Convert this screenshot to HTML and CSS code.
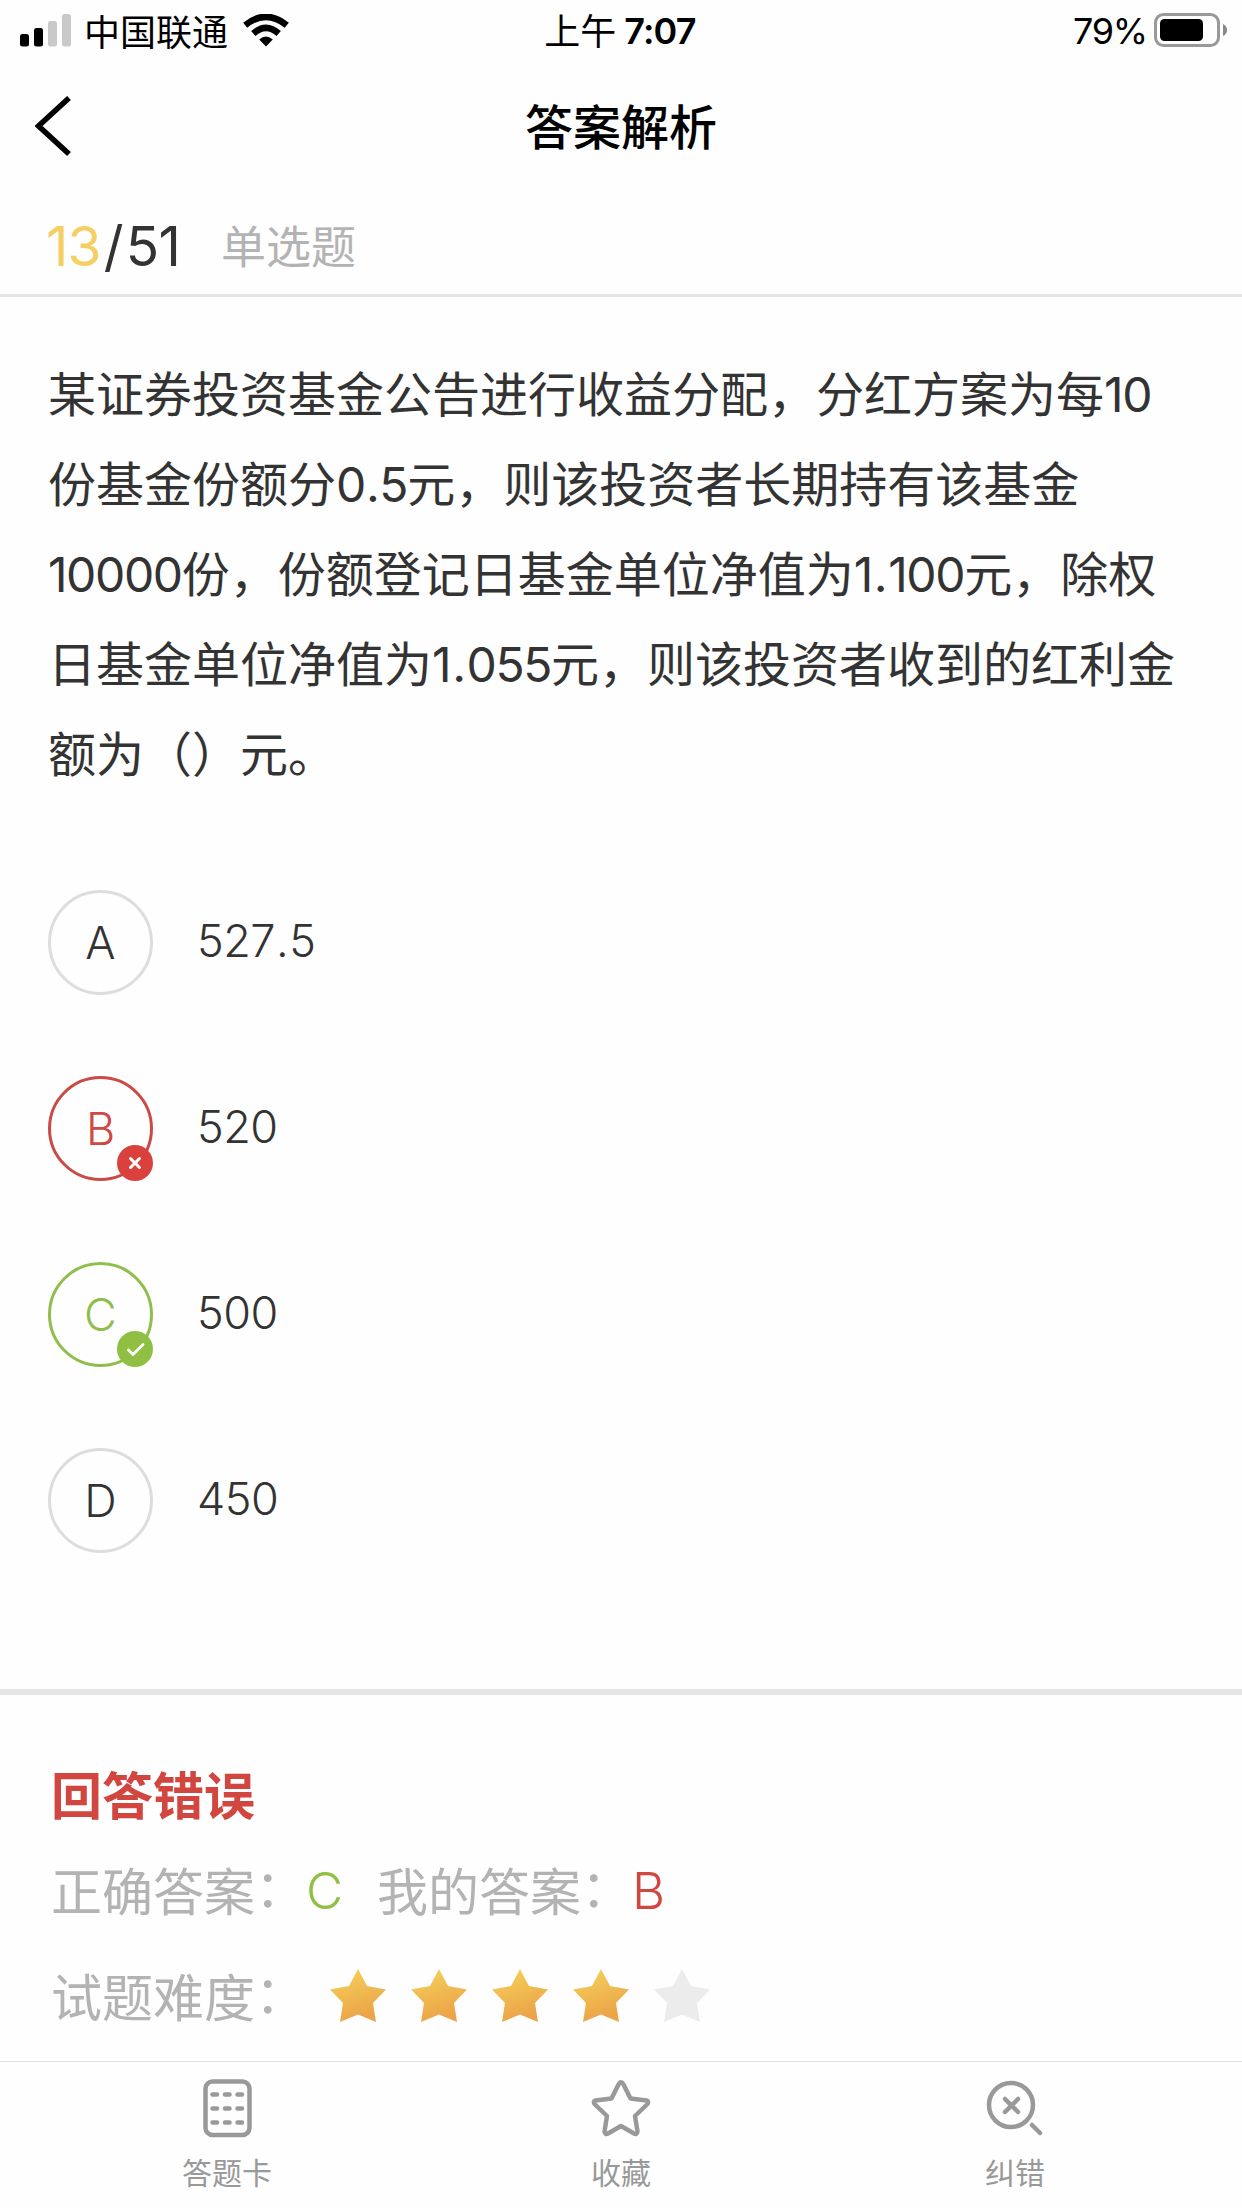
FILE: index.html
```html
<!DOCTYPE html>
<html lang="zh-CN">
<head>
<meta charset="utf-8">
<title>答案解析</title>
<link rel="stylesheet" href="styles.css">
</head>
<body>
<div class="screen">
  <header class="status">
    <div class="status-left">
      <svg class="signal" width="52" height="33" viewBox="0 0 52 33"><rect y="20" width="9" height="12.500" rx="2.500"/><rect x="14" y="14" width="9" height="18.500" rx="2.500"/><g fill="#c9c9c9"><rect x="28" y="7" width="9" height="25.500" rx="2.500"/><rect x="42" width="9" height="32.500" rx="2.500"/></g></svg>
      <span class="carrier">中国联通</span>
      <svg class="wifi" width="46" height="33" viewBox="0 0 46 33"><path d="M23 32.500 16.200 25.600Q23 19.200 29.800 25.600Z"/><path d="M10.300 19.500Q23 8.200 35.700 19.500" fill="none" stroke="#000" stroke-width="6.500"/><path d="M2.200 11.200Q23-5.500 43.800 11.200" fill="none" stroke="#000" stroke-width="6.500"/></svg>
    </div>
    <div class="time"><span class="cn">上午</span><span class="clock">7:07</span></div>
    <div class="status-right">
      <span class="percent">79%</span>
      <svg width="74" height="34" viewBox="0 0 74 34"><rect x="1.500" y="1.500" width="63" height="31" rx="8" fill="none" stroke="#999" stroke-width="3"/><rect x="6" y="6" width="43" height="22" rx="4.500"/><path d="M69 11Q73 13 73 17T69 23Z" fill="#888"/></svg>
    </div>
  </header>
  <nav class="nav">
    <svg class="back" width="38" height="60" viewBox="0 0 38 60"><path d="M34 2 3.500 30 34 58" fill="none" stroke="#000" stroke-width="5.500"/></svg>
    <h1 class="title">答案解析</h1>
  </nav>
  <div class="progress"><span class="current">13</span><span class="slash">/</span><span class="total">51</span><span class="kind">单选题</span></div>
  <main class="question">
    <p class="stem">某证券投资基金公告进行收益分配，分红方案为每<span class="n">10</span><br>份基金份额分<span class="n">0<i class="dot narrow">.</i>5</span>元，则该投资者长期持有该基金<br><span class="n">10000</span>份，份额登记日基金单位净值为<span class="n">1<i class="dot">.</i>100</span>元，除权<br>日基金单位净值为<span class="n">1<i class="dot">.</i>055</span>元，则该投资者收到的红利金<br>额为（）元。</p>
    <ul class="options">
      <li class="option"><span class="mark">A</span><span class="value">527<i class="dot narrow">.</i>5</span></li>
      <li class="option"><span class="mark wrong">B<svg class="badge" viewBox="0 0 36 36"><circle cx="18" cy="18" r="18" fill="#db413c"/><path d="m13.500 13.500 9 9m0-9-9 9" stroke="#fff" stroke-width="3" stroke-linecap="round"/></svg></span><span class="value">520</span></li>
      <li class="option"><span class="mark right">C<svg class="badge" viewBox="0 0 36 36"><circle cx="18" cy="18" r="18" fill="#8fc043"/><path d="m11.500 19 4.500 4.500 10-10" fill="none" stroke="#fff" stroke-width="2.800" stroke-linecap="round" stroke-linejoin="round"/></svg></span><span class="value">500</span></li>
      <li class="option"><span class="mark">D</span><span class="value">450</span></li>
    </ul>
  </main>
  <section class="result">
    <h2 class="verdict">回答错误</h2>
    <p class="answers"><span>正确答案<span class="colon">：</span></span><span class="letter good">C</span><span>我的答案<span class="colon">：</span></span><span class="letter bad">B</span></p>
    <div class="difficulty"><span>试题难度<span class="colon">：</span></span>
      <svg class="stars" width="380" height="53" viewBox="0 0 380 53">
        <defs><linearGradient id="gold" x1="0" y1="0" x2=".3" y2="1"><stop offset="0" stop-color="#f6d35c"/><stop offset="1" stop-color="#eba447"/></linearGradient><path id="star" d="M28 0 37 17 56 20.500 43 34 46 53 28 45.500 10 53 13 34 0 20.500 19 17Z"/></defs>
        <g fill="url(#gold)"><use href="#star"/><use href="#star" x="81"/><use href="#star" x="162"/><use href="#star" x="243"/></g><use href="#star" x="324" fill="#ececec"/>
      </svg>
    </div>
  </section>
  <footer class="tabs">
    <div class="tab"><svg width="60" height="60" viewBox="0 0 60 60"><rect x="8.500" y="2.500" width="44" height="53.500" rx="7"/><path d="M15.500 15.500h4.500m8 0h4.500m8 0h4.500m-29.500 14h4.500m8 0h4.500m8 0h4.500m-29.500 14h4.500m8 0h4.500m8 0h4.500"/></svg><span>答题卡</span></div>
    <div class="tab"><svg width="60" height="60" viewBox="0 0 60 60"><path d="M27.500 5.500Q30 1 32.500 5.500L39.500 19.500 55.500 21.500Q58.500 22.500 56 25.500L44 37 46.500 52.500Q46 56 43 54.500L30 47 17 54.500Q14 56 13.500 52.500L16 37 4 25.500Q1.500 22.500 4.500 21.500L20.500 19.500Z"/></svg><span>收藏</span></div>
    <div class="tab"><svg width="60" height="60" viewBox="0 0 60 60"><circle cx="26" cy="26" r="22"/><path d="m20 20 13 13m0-13L20 33M47 46l8 8"/></svg><span>纠错</span></div>
  </footer>
</div>
</body>
</html>
```
FILE: styles.css
```css
* { box-sizing: border-box; margin: 0; padding: 0; }
body {
  background: #fefefe;
  color: #333;
  font-family: Inter, "Noto Sans CJK SC", sans-serif;
}
svg { display: block; flex: none; }
.screen { width: 1242px; height: 2208px; display: flex; flex-direction: column; overflow: hidden; }

.status {
  height: 60px;
  padding: 0 14px 2px 20px;
  display: grid;
  grid-template-columns: 1fr auto 1fr;
  align-items: center;
  color: #000;
  font-size: 36px;
  line-height: 58px;
}
.status-left { display: flex; align-items: center; }
.carrier { margin: 0 15px 0 12px; font-family: "Noto Sans CJK SC", sans-serif; }
.time { display: flex; gap: 8px; margin-right: 8px; font-weight: 500; }
.time .cn { font: 400 36px/58px "Noto Sans CJK SC", sans-serif; }
.clock { padding-top: 2px; font-weight: 600; font-size: 36px; letter-spacing: -.8px; }
.status-right { display: flex; justify-content: flex-end; align-items: center; gap: 7px; }
.percent { padding-top: 2px; letter-spacing: -1.2px; }

.nav { height: 132px; padding: 0 35px; display: grid; grid-template-columns: 38px 1fr 38px; align-items: center; }
.title { padding-bottom: 4px; font: 500 48px/70px "Noto Sans CJK SC", sans-serif; color: #000; text-align: center; }

.progress {
  height: 105px;
  padding: 6px 46px 0;
  display: flex;
  align-items: center;
  border-bottom: 3px solid #e5e5e5;
  font-size: 55px;
  letter-spacing: -.8px;
}
.current { color: #f5cf63; }
.slash { margin: 0 3px; }
.kind { margin-left: 41px; padding-bottom: 2px; color: #b3b3b3; font: 45px/60px "Noto Sans CJK SC", sans-serif; letter-spacing: 0; }

.question { height: 1392px; padding-top: 49px; }
.stem { padding-left: 48px; font: 48px/90px "Noto Sans CJK SC", sans-serif; white-space: nowrap; }
.n { font-family: Inter, sans-serif; line-height: 1; letter-spacing: -1.4px; }
.dot { margin: 0 2px; font-style: normal; }
.narrow { margin: 0 1px; }
.options { padding: 94px 48px 0; display: flex; flex-direction: column; gap: 81px; list-style: none; }
.option { height: 105px; display: flex; align-items: center; gap: 44px; font-size: 45px; font-weight: 300; }
.mark {
  position: relative;
  width: 105px;
  height: 105px;
  display: flex;
  justify-content: center;
  align-items: center;
  border: 3px solid #ddd;
  border-radius: 50%;
}
.wrong { border-color: #ca4b45; color: #cf4842; }
.right { border-color: #91bd4c; color: #91bd4c; }
.badge { position: absolute; right: -3px; bottom: -3px; width: 36px; height: 36px; }
.value { padding-bottom: 4px; letter-spacing: -.5px; }

.result {
  flex: 1;
  padding: 63px 51px 0;
  border-top: 6px solid #e5e5e5;
  color: #b3b3b3;
  font: 51px/70px "Noto Sans CJK SC", sans-serif;
}
.verdict { font-size: 51px; font-weight: 700; color: #d24640; }
.answers { margin-top: 26px; display: flex; }
.colon { line-height: 1; vertical-align: 4px; }
.letter { padding-top: 2px; font-family: Inter, sans-serif; font-weight: 300; }
.good { width: 71px; color: #8fc043; }
.bad { color: #d24640; }
.difficulty { margin-top: 34px; display: flex; align-items: center; }
.stars { margin-left: 24px; }

.tabs {
  height: 147px;
  padding: 17px 30px 0;
  display: grid;
  grid-template-columns: repeat(3, 1fr);
  border-top: 1px solid #dedede;
  color: #999;
  font: 30px/44px "Noto Sans CJK SC", sans-serif;
}
.tab { display: flex; flex-direction: column; align-items: center; gap: 10px; }
.tab svg { fill: none; stroke: #999; stroke-width: 4.500; stroke-linecap: round; stroke-linejoin: round; }
```
